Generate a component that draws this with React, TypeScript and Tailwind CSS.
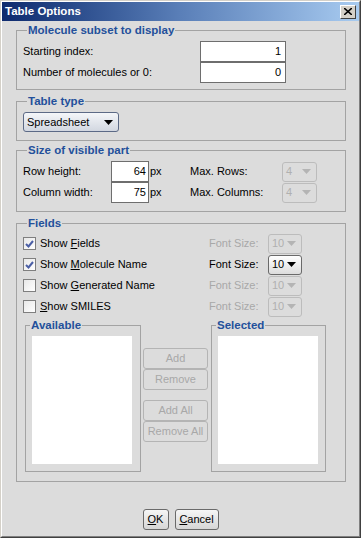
import React from "react";

const legendCls =
  "ml-[4px] px-[1px] text-[11.5px] font-bold leading-[14px] text-[#23509b]";

function Mn({ text, at = 0 }: { text: string; at?: number }) {
  return (
    <>
      {text.slice(0, at)}
      <span className="underline underline-offset-[1px]">{text[at]}</span>
      {text.slice(at + 1)}
    </>
  );
}

function Arrow({ disabled }: { disabled?: boolean }) {
  return (
    <svg width="9" height="5" viewBox="0 0 9 5" className="shrink-0">
      <path d="M0 0H9L4.5 5Z" fill={disabled ? "#b4b4b4" : "#000"} />
    </svg>
  );
}

function Combo({
  value,
  width,
  height = "h-[20px]",
  disabled,
  big,
}: {
  value: string;
  width: string;
  height?: string;
  disabled?: boolean;
  big?: boolean;
}) {
  return (
    <div
      className={`${width} ${height} flex items-center justify-between rounded-[3px] border pl-[3px] pr-[5px] ${
        disabled
          ? "border-[#bcbcbc] bg-[#dcdcdc] text-[#b0b0b0]"
          : big
          ? "border-[#5c6a86] bg-linear-to-b from-[#f4f6f9] to-[#d2d7e0] text-black"
          : "border-[#6a6a6a] bg-linear-to-b from-[#ffffff] to-[#dcdcdc] text-black"
      }`}
    >
      <span>{value}</span>
      <Arrow disabled={disabled} />
    </div>
  );
}

function Check({ checked }: { checked?: boolean }) {
  return (
    <div className="w-[13px] h-[13px] border border-[#7f7f7f] bg-linear-to-br from-[#e8e8e8] to-white flex items-center justify-center shrink-0">
      {checked ? (
        <svg width="9" height="8" viewBox="0 0 9 8">
          <path
            d="M1 4L3.5 6.5L8 1"
            fill="none"
            stroke="#4b5fa6"
            strokeWidth="2"
          />
        </svg>
      ) : null}
    </div>
  );
}

function SideButton({ label }: { label: string }) {
  return (
    <div className="h-[21px] w-[65px] flex items-center justify-center rounded-[3px] border border-[#b4b4b4] text-[#a8a8a8]">
      {label}
    </div>
  );
}

function ListGroup({ title, width }: { title: string; width: string }) {
  return (
    <fieldset className={`${width} h-[154px] border border-[#a3a3a3]`}>
      <legend className={legendCls}>{title}</legend>
      <div className="ml-[6px] mt-[4px] w-[100px] h-[128px] bg-white" />
    </fieldset>
  );
}

const fields = [
  { label: "Show Fields", at: 5, checked: true, enabled: false },
  { label: "Show Molecule Name", at: 5, checked: true, enabled: true },
  { label: "Show Generated Name", at: 5, checked: false, enabled: false },
  { label: "Show SMILES", at: 0, checked: false, enabled: false },
];

export default function App() {
  return (
    <div className="w-[361px] h-[538px] border border-[#d4d0c8] border-r-[#404040] border-b-[#404040] font-['Liberation_Sans',Arial,sans-serif] text-[11px] text-black">
      <div className="h-full flex flex-col border border-white border-r-[#808080] border-b-[#808080] bg-[#dcdcdc]">
        {/* title bar */}
        <div className="h-[19px] shrink-0 flex items-center justify-between pl-[3px] pr-[3px] bg-linear-to-r from-[#0e2a6e] via-[#5a7fb8] to-[#a8cbf0]">
          <span className="text-white font-bold text-[11.5px]">
            Table Options
          </span>
          <div className="w-[16px] h-[14px] flex items-center justify-center bg-[#d4d0c8] border border-white border-r-[#404040] border-b-[#404040]">
            <svg width="8" height="7" viewBox="0 0 8 7">
              <path d="M0 0L8 7M8 0L0 7" stroke="#000" strokeWidth="1.6" />
            </svg>
          </div>
        </div>

        <div className="flex-1 flex flex-col pl-[14px]">
          {/* Molecule subset */}
          <fieldset className="mt-[2px] w-[330px] border border-[#a3a3a3] pl-[6px] pb-[6px]">
            <legend className={legendCls}>Molecule subset to display</legend>
            <div className="mt-[4px] flex items-center h-[21px]">
              <span className="w-[177px]">Starting index:</span>
              <div className="w-[86px] h-[21px] border border-[#6e6e6e] bg-white flex items-center justify-end pr-[4px]">
                1
              </div>
            </div>
            <div className="flex items-center h-[21px]">
              <span className="w-[177px]">Number of molecules or 0:</span>
              <div className="w-[86px] h-[21px] border border-[#6e6e6e] bg-white flex items-center justify-end pr-[4px]">
                0
              </div>
            </div>
          </fieldset>

          {/* Table type */}
          <fieldset className="mt-[4px] w-[330px] border border-[#a3a3a3] pl-[6px] pb-[8px]">
            <legend className={legendCls}>Table type</legend>
            <div className="mt-[4px]">
              <Combo value="Spreadsheet" width="w-[96px]" big />
            </div>
          </fieldset>

          {/* Size of visible part */}
          <fieldset className="mt-[2px] w-[330px] border border-[#a3a3a3] pl-[6px] pb-[8px]">
            <legend className={legendCls}>Size of visible part</legend>
            {[
              ["Row height:", "64", "Max. Rows:"],
              ["Column width:", "75", "Max. Columns:"],
            ].map(([label, val, max], i) => (
              <div
                key={label}
                className={`flex items-center h-[21px] ${i === 0 ? "mt-[4px]" : ""}`}
              >
                <span className="w-[88px]">{label}</span>
                <div className="w-[38px] h-[21px] border border-[#6e6e6e] bg-white flex items-center justify-end pr-[2px]">
                  {val}
                </div>
                <span className="w-[41px] pl-[1px]">px</span>
                <span className="w-[92px]">{max}</span>
                <Combo value="4" width="w-[35px]" disabled />
              </div>
            ))}
          </fieldset>

          {/* Fields */}
          <fieldset className="mt-[4px] w-[330px] border border-[#a3a3a3] pl-[6px] pb-[9px]">
            <legend className={legendCls}>Fields</legend>
            <div className="mt-[3px]">
              {fields.map((f) => (
                <div key={f.label} className="flex items-center h-[21px]">
                  <div className="w-[186px] flex items-center gap-[4px]">
                    <Check checked={f.checked} />
                    <span>
                      <Mn text={f.label} at={f.at} />
                    </span>
                  </div>
                  <span
                    className={`w-[59px] ${f.enabled ? "text-black" : "text-[#a8a8a8]"}`}
                  >
                    Font Size:
                  </span>
                  <Combo value="10" width="w-[34px]" disabled={!f.enabled} />
                </div>
              ))}
            </div>
            <div className="mt-[1px] ml-[2px] flex items-start">
              <ListGroup title="Available" width="w-[116px]" />
              <div className="ml-[2px] mt-[30px] flex flex-col">
                <SideButton label="Add" />
                <SideButton label="Remove" />
                <div className="h-[10px]" />
                <SideButton label="Add All" />
                <SideButton label="Remove All" />
              </div>
              <div className="ml-[3px]">
                <ListGroup title="Selected" width="w-[115px]" />
              </div>
            </div>
          </fieldset>

          <div className="flex-1" />
          <div className="flex justify-center gap-[6px] pr-[14px] pb-[6px]">
            <div className="w-[26px] h-[21px] flex items-center justify-center rounded-[3px] border border-[#6a6a6a] bg-linear-to-b from-[#f6f6f6] to-[#d6d6d6]">
              <Mn text="OK" at={0} />
            </div>
            <div className="w-[44px] h-[21px] flex items-center justify-center rounded-[3px] border border-[#6a6a6a] bg-linear-to-b from-[#f6f6f6] to-[#d6d6d6]">
              <Mn text="Cancel" at={0} />
            </div>
          </div>
        </div>
      </div>
    </div>
  );
}
